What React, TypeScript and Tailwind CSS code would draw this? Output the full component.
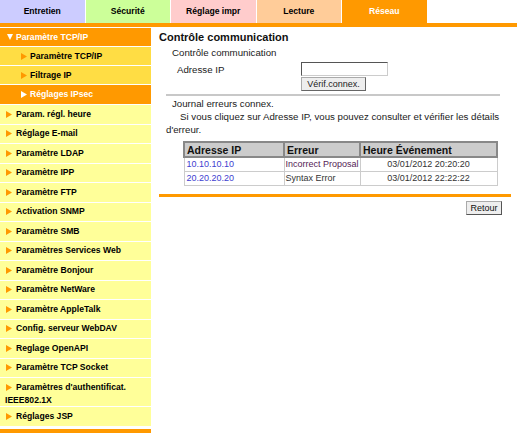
import React from "react";

const Tri = ({ color }: { color: string }) => (
  <svg width="6" height="7" viewBox="0 0 6 7" className="inline-block shrink-0">
    <polygon points="0,0 6,3.5 0,7" fill={color} />
  </svg>
);

const Down = () => (
  <svg width="6" height="6" viewBox="0 0 6 6" className="inline-block shrink-0">
    <polygon points="0,0 6,0 3,6" fill="#ffffff" />
  </svg>
);

const tabs = [
  { label: "Entretien", cls: "bg-[#ccccff] text-black" },
  { label: "Sécurité", cls: "bg-[#ccff99] text-black" },
  { label: "Réglage impr", cls: "bg-[#ffcccc] text-black" },
  { label: "Lecture", cls: "bg-[#ffcc99] text-black" },
  { label: "Réseau", cls: "bg-[#ff9900] text-white" },
];

const lower = [
  "Param. régl. heure",
  "Réglage E-mail",
  "Paramètre LDAP",
  "Paramètre IPP",
  "Paramètre FTP",
  "Activation SNMP",
  "Paramètre SMB",
  "Paramètres Services Web",
  "Paramètre Bonjour",
  "Paramètre NetWare",
  "Paramètre AppleTalk",
  "Config. serveur WebDAV",
  "Reglage OpenAPI",
  "Paramètre TCP Socket",
];

export default function App() {
  return (
    <div className="w-[517px] h-[435px] bg-white overflow-hidden font-['Liberation_Sans',Arial,sans-serif] text-[#1a1a1a]">
      <div className="flex h-[23px] gap-px">
        {tabs.map((t) => (
          <div
            key={t.label}
            className={`w-[84.5px] flex items-center justify-center text-[8.6px] font-bold ${t.cls}`}
          >
            {t.label}
          </div>
        ))}
      </div>
      <div className="h-[4px] bg-[#ff9900]" />
      <div className="flex">
        <aside className="w-[151px] shrink-0 flex flex-col pt-px text-[8.6px] font-bold">
          <div className="h-[19px] border-b border-white bg-[#ff9900] text-white flex items-center pl-[7px] gap-[3px]">
            <Down />
            <span>Paramètre TCP/IP</span>
          </div>
          <div className="h-[19px] border-b border-white bg-[#ffdd44] text-black flex items-center pl-[21px] gap-[3px]">
            <Tri color="#ff9900" />
            <span>Paramètre TCP/IP</span>
          </div>
          <div className="h-[19px] border-b border-white bg-[#ffdd44] text-black flex items-center pl-[21px] gap-[3px]">
            <Tri color="#ff9900" />
            <span>Filtrage IP</span>
          </div>
          <div className="h-[20px] border-b border-white bg-[#ff9900] text-white flex items-center pl-[21px] gap-[3px]">
            <Tri color="#ffffff" />
            <span>Réglages IPsec</span>
          </div>
          {lower.map((l) => (
            <div
              key={l}
              className="h-[19.5px] border-b border-white bg-[#ffff99] text-black flex items-center pl-[6px] gap-[4px]"
            >
              <Tri color="#ff9900" />
              <span>{l}</span>
            </div>
          ))}
          <div className="h-[29px] border-b border-white bg-[#ffff99] text-black pl-[5px] pt-[3px] leading-[12.5px]">
            <span className="inline-block w-[11px] pl-px">
              <Tri color="#ff9900" />
            </span>
            Paramètres d'authentificat. IEEE802.1X
          </div>
          <div className="h-[19.5px] border-b border-white bg-[#ffff99] text-black flex items-center pl-[6px] gap-[4px]">
            <Tri color="#ff9900" />
            <span>Réglages JSP</span>
          </div>
          <div className="mt-[2px] h-[4px] bg-[#ff9900]" />
        </aside>
        <main className="flex-1 flex flex-col text-[9.7px] leading-[13px]">
          <div className="ml-[8px] mt-[3px] text-[11px] leading-[14px] font-bold text-[#111]">
            Contrôle communication
          </div>
          <div className="ml-[21px] mt-[2px] leading-[14px]">Contrôle communication</div>
          <div className="flex mt-[2px]">
            <div className="ml-[26px] w-[124px] pt-[1px]">Adresse IP</div>
            <div className="flex flex-col">
              <div className="w-[87px] h-[14px] border border-[#555] border-b-[#ccc] border-r-[#ccc] bg-white" />
              <div className="mt-px w-[65px] h-[14px] border border-[#aaa] border-b-[#666] border-r-[#666] bg-[#eeeeee] text-[9px] leading-[12px] text-center text-[#222]">
                Vérif.connex.
              </div>
            </div>
          </div>
          <div className="ml-[15px] mt-[3px] w-[334px] h-[2px] bg-[#c8c8c8]" />
          <div className="ml-[21px] mt-[1px]">Journal erreurs connex.</div>
          <div className="ml-[15px] w-[340px] indent-[14px]">
            Si vous cliquez sur Adresse IP, vous pouvez consulter et vérifier les détails d'erreur.
          </div>
          <table className="ml-[32px] mt-[5px] w-[315px] table-fixed border-collapse border border-[#bbb] text-[9px] leading-[12px] whitespace-nowrap">
            <colgroup>
              <col className="w-[100px]" />
              <col className="w-[76px]" />
              <col />
            </colgroup>
            <thead>
              <tr className="bg-[#cccccc] text-[10.5px] font-bold text-[#111]">
                <th className="h-[15px] border-2 border-[#888] text-left px-[2px] py-0 font-bold leading-[12px]">Adresse IP</th>
                <th className="border-2 border-[#888] text-left px-[2px] py-0 font-bold leading-[12px]">Erreur</th>
                <th className="border-2 border-[#888] text-left px-[2px] py-0 font-bold leading-[12px]">Heure Événement</th>
              </tr>
            </thead>
            <tbody>
              <tr className="h-[14px]">
                <td className="border border-[#ccc] px-[2px] py-0 text-[#4040d0]">10.10.10.10</td>
                <td className="border border-[#ccc] pl-px pr-0 py-0 text-[#552255] overflow-hidden">Incorrect Proposal</td>
                <td className="border border-[#ccc] px-[2px] py-0 text-center text-[#333]">03/01/2012 20:20:20</td>
              </tr>
              <tr className="h-[14px]">
                <td className="border border-[#ccc] px-[2px] py-0 text-[#4040d0]">20.20.20.20</td>
                <td className="border border-[#ccc] pl-px pr-0 py-0 text-[#333]">Syntax Error</td>
                <td className="border border-[#ccc] px-[2px] py-0 text-center text-[#333]">03/01/2012 22:22:22</td>
              </tr>
            </tbody>
          </table>
          <div className="ml-[8px] mt-[8px] w-[352px] h-[3px] bg-[#ff9900]" />
          <div className="ml-[315px] mt-[4px] w-[36px] h-[14px] border border-[#aaa] border-b-[#555] border-r-[#555] bg-[#eeeeee] text-[9px] leading-[12px] text-center text-[#111]">
            Retour
          </div>
        </main>
      </div>
    </div>
  );
}
